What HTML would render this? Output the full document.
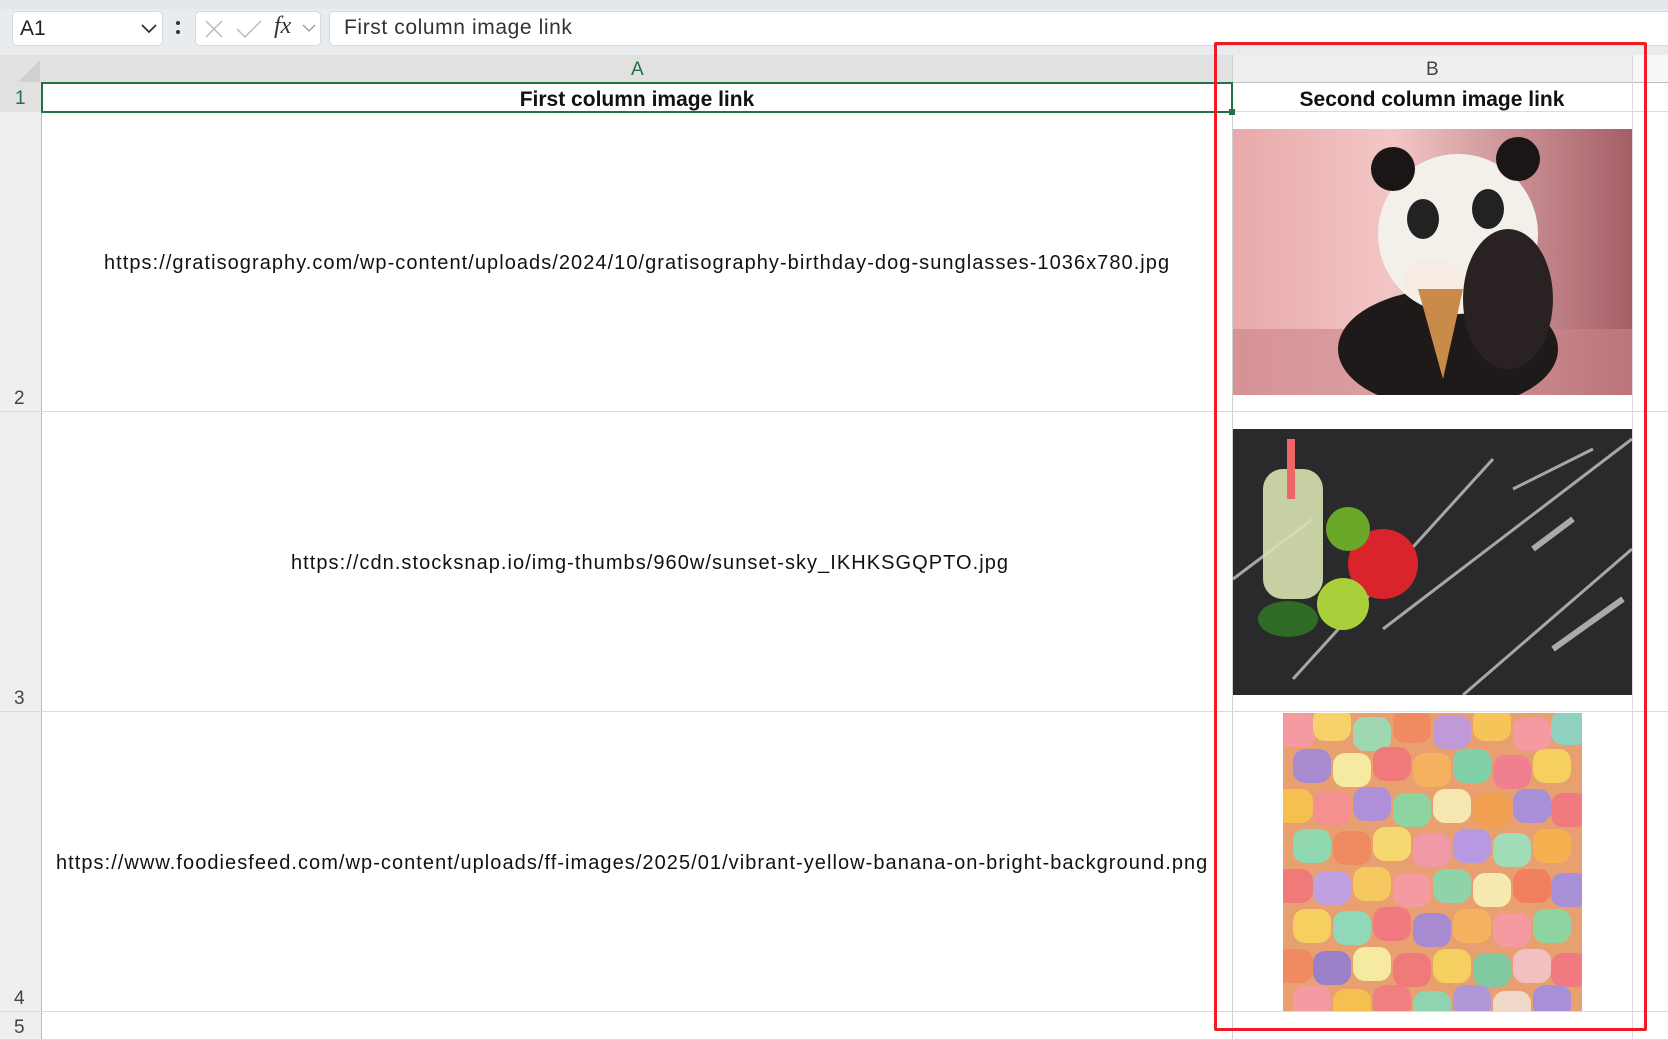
<!DOCTYPE html>
<html><head><meta charset="utf-8"><style>
*{margin:0;padding:0;box-sizing:border-box}
body{width:1668px;height:1040px;overflow:hidden;background:#fff;font-family:"Liberation Sans","Noto Sans CJK SC",sans-serif;position:relative}
.a{position:absolute}
.hl{position:absolute;height:1px;background:#dadada}
.vl{position:absolute;width:1px;background:#dadada}
.txt{position:absolute;font-size:20px;color:#111;white-space:nowrap}
.u{letter-spacing:1.05px}
</style></head><body>
<div class="a" style="left:0;top:0;width:1668px;height:55px;background:#e9ecef"></div>
<div class="a" style="left:0;top:0;width:1668px;height:9px;background:#e3e6ea"></div>
<div class="a" style="left:12px;top:11px;width:151px;height:35px;background:#fff;border:1px solid #d6d9dd;border-radius:5px"></div>
<div class="txt" style="left:20px;top:17px;font-size:21px;color:#222">A1</div>
<svg class="a" style="left:141px;top:23px" width="16" height="10"><path d="M1 2 L8 9 L15 2" stroke="#333" stroke-width="1.8" fill="none"/></svg>
<div class="a" style="left:176px;top:21px;width:4px;height:4px;background:#333;border-radius:2px"></div>
<div class="a" style="left:176px;top:30px;width:4px;height:4px;background:#333;border-radius:2px"></div>
<div class="a" style="left:195px;top:11px;width:126px;height:35px;background:#fff;border:1px solid #d6d9dd;border-radius:5px"></div>
<svg class="a" style="left:203px;top:18px" width="22" height="22"><path d="M3 3 L19 19 M19 3 L3 19" stroke="#bbb" stroke-width="1.5"/></svg>
<svg class="a" style="left:235px;top:18px" width="28" height="22"><path d="M2 11 L10 19 L26 3" stroke="#bbb" stroke-width="1.5" fill="none"/></svg>
<div class="txt" style="left:274px;top:13px;font-family:'Liberation Serif',serif;font-style:italic;font-size:24px;color:#333">fx</div>
<svg class="a" style="left:302px;top:24px" width="14" height="9"><path d="M1 1 L7 7 L13 1" stroke="#999" stroke-width="1.3" fill="none"/></svg>
<div class="a" style="left:329px;top:11px;width:1400px;height:35px;background:#fff;border:1px solid #d6d9dd;border-radius:5px"></div>
<div class="txt u" style="left:344px;top:16px;font-size:21px;color:#333;letter-spacing:.6px">First column image link</div>

<!-- headers -->
<div class="a" style="left:0;top:55px;width:1668px;height:28px;background:#e1e1e1"></div>
<div class="a" style="left:1232px;top:55px;width:400px;height:28px;background:#efefef"></div>
<div class="a" style="left:1632px;top:55px;width:36px;height:28px;background:#f7f7f7"></div>
<svg class="a" style="left:18px;top:60px" width="22" height="22"><path d="M22 0 L22 22 L0 22 Z" fill="#d0d0d0"/></svg>
<div class="a" style="left:0;top:83px;width:42px;height:957px;background:#efefef;border-right:1px solid #bdbdbd"></div>
<div class="a" style="left:0;top:83px;width:42px;height:29px;background:#e1e1e1;border-right:1px solid #bdbdbd"></div>
<div class="a" style="left:42px;top:82px;width:1626px;height:1px;background:#bdbdbd"></div>
<div class="txt" style="left:631px;top:59px;font-size:19px;color:#217346">A</div>
<div class="txt" style="left:1426px;top:59px;font-size:19px;color:#444">B</div>
<div class="txt" style="left:15px;top:88px;font-size:19px;color:#217346">1</div>
<div class="txt" style="left:14px;top:388px;font-size:19px;color:#444">2</div>
<div class="txt" style="left:14px;top:688px;font-size:19px;color:#444">3</div>
<div class="txt" style="left:14px;top:988px;font-size:19px;color:#444">4</div>
<div class="txt" style="left:14px;top:1017px;font-size:19px;color:#444">5</div>
<!-- grid -->
<div class="vl" style="left:1232px;top:55px;height:985px;background:#d0d0d0"></div>
<div class="vl" style="left:1632px;top:55px;height:985px"></div>
<div class="hl" style="left:42px;top:111px;width:1626px"></div>
<div class="hl" style="left:0;top:411px;width:1668px"></div>
<div class="hl" style="left:0;top:711px;width:1668px"></div>
<div class="hl" style="left:0;top:1011px;width:1668px"></div>
<div class="hl" style="left:0;top:1039px;width:1668px"></div>
<!-- selection -->
<div class="a" style="left:41px;top:82px;width:1192px;height:31px;border:2px solid #217346"></div>
<div class="a" style="left:1229px;top:109px;width:6px;height:6px;background:#217346"></div>
<!-- text -->
<div class="txt" style="left:42px;width:1190px;text-align:center;top:88px;font-weight:bold;font-size:21px">First column image link</div>
<div class="txt" style="left:1232px;width:400px;text-align:center;top:88px;font-weight:bold;font-size:21px">Second column image link</div>
<div class="txt u" style="left:104px;top:252px">https://gratisography.com/wp-content/uploads/2024/10/gratisography-birthday-dog-sunglasses-1036x780.jpg</div>
<div class="txt u" style="left:291px;top:552px">https://cdn.stocksnap.io/img-thumbs/960w/sunset-sky_IKHKSGQPTO.jpg</div>
<div class="txt u" style="left:56px;top:852px;width:1160px;overflow:hidden">https://www.foodiesfeed.com/wp-content/uploads/ff-images/2025/01/vibrant-yellow-banana-on-bright-background.png</div>

<!-- panda -->
<svg class="a" style="left:1233px;top:129px" width="399" height="266">
<defs><linearGradient id="pg" x1="0" x2="1"><stop offset="0" stop-color="#e8a9aa"/><stop offset=".4" stop-color="#f3c6c6"/><stop offset="1" stop-color="#a45e66"/></linearGradient></defs>
<rect width="399" height="266" fill="url(#pg)"/>
<rect y="200" width="399" height="66" fill="#c98488" opacity=".6"/>
<ellipse cx="215" cy="220" rx="110" ry="60" fill="#1e1a1a"/>
<ellipse cx="225" cy="105" rx="80" ry="80" fill="#f3efe9"/>
<ellipse cx="160" cy="40" rx="22" ry="22" fill="#1a1616"/>
<ellipse cx="285" cy="30" rx="22" ry="22" fill="#1a1616"/>
<ellipse cx="190" cy="90" rx="16" ry="20" fill="#222"/>
<ellipse cx="255" cy="80" rx="16" ry="20" fill="#222"/>
<ellipse cx="275" cy="170" rx="45" ry="70" fill="#2a2222"/>
<ellipse cx="200" cy="150" rx="30" ry="20" fill="#f6ece4"/>
<path d="M185 160 L230 160 L210 250 Z" fill="#c98a4a"/>
</svg>
<!-- fruit -->
<svg class="a" style="left:1233px;top:429px" width="399" height="266">
<rect width="399" height="266" fill="#2a2a2c"/>
<path d="M60 250 L260 30 M230 266 L399 120 M280 60 L360 20 M150 200 L399 10 M0 150 L80 90" stroke="#ddd" stroke-width="3" opacity=".7"/>
<path d="M300 120 L340 90 M320 220 L390 170" stroke="#fff" stroke-width="6" opacity=".6"/>
<rect x="30" y="40" width="60" height="130" rx="20" fill="#d8e2b0" opacity=".9"/>
<rect x="54" y="10" width="8" height="60" fill="#e66"/>
<circle cx="150" cy="135" r="35" fill="#d8242a"/>
<circle cx="115" cy="100" r="22" fill="#6aa82a"/>
<circle cx="110" cy="175" r="26" fill="#a9cf3b"/>
<ellipse cx="55" cy="190" rx="30" ry="18" fill="#2f6b26"/>
</svg>
<!-- candy -->
<svg class="a" style="left:1283px;top:713px" width="299" height="298">
<rect width="299" height="298" fill="#e8a070"/>
<g>
<rect x="-5" y="0" width="38" height="34" rx="12" fill="#f49aa0"/><rect x="30" y="-6" width="38" height="34" rx="12" fill="#f5d26a"/><rect x="70" y="4" width="38" height="34" rx="12" fill="#9fd8b0"/><rect x="110" y="-4" width="38" height="34" rx="12" fill="#f08a60"/><rect x="150" y="2" width="38" height="34" rx="12" fill="#c09ad8"/><rect x="190" y="-6" width="38" height="34" rx="12" fill="#f5c55a"/><rect x="230" y="4" width="38" height="34" rx="12" fill="#f49aa0"/><rect x="268" y="-2" width="38" height="34" rx="12" fill="#90d0c0"/>
<rect x="10" y="36" width="38" height="34" rx="12" fill="#a78ad0"/><rect x="50" y="40" width="38" height="34" rx="12" fill="#f6eaa0"/><rect x="90" y="34" width="38" height="34" rx="12" fill="#f07a7a"/><rect x="130" y="40" width="38" height="34" rx="12" fill="#f5b060"/><rect x="170" y="36" width="38" height="34" rx="12" fill="#80d0a8"/><rect x="210" y="42" width="38" height="34" rx="12" fill="#f08090"/><rect x="250" y="36" width="38" height="34" rx="12" fill="#f5d060"/>
<rect x="-8" y="76" width="38" height="34" rx="12" fill="#f5c050"/><rect x="30" y="78" width="38" height="34" rx="12" fill="#f49090"/><rect x="70" y="74" width="38" height="34" rx="12" fill="#b090d8"/><rect x="110" y="80" width="38" height="34" rx="12" fill="#8ed4a0"/><rect x="150" y="76" width="38" height="34" rx="12" fill="#f6e6b0"/><rect x="190" y="80" width="38" height="34" rx="12" fill="#f0a050"/><rect x="230" y="76" width="38" height="34" rx="12" fill="#a890d8"/><rect x="268" y="80" width="38" height="34" rx="12" fill="#f07a80"/>
<rect x="10" y="116" width="38" height="34" rx="12" fill="#90d8b0"/><rect x="50" y="118" width="38" height="34" rx="12" fill="#f08a60"/><rect x="90" y="114" width="38" height="34" rx="12" fill="#f5d870"/><rect x="130" y="120" width="38" height="34" rx="12" fill="#f09aa8"/><rect x="170" y="116" width="38" height="34" rx="12" fill="#b898e0"/><rect x="210" y="120" width="38" height="34" rx="12" fill="#a0dcb8"/><rect x="250" y="116" width="38" height="34" rx="12" fill="#f5b050"/>
<rect x="-8" y="156" width="38" height="34" rx="12" fill="#f07a7a"/><rect x="30" y="158" width="38" height="34" rx="12" fill="#c0a0e0"/><rect x="70" y="154" width="38" height="34" rx="12" fill="#f5c860"/><rect x="110" y="160" width="38" height="34" rx="12" fill="#f49aa0"/><rect x="150" y="156" width="38" height="34" rx="12" fill="#8ed4a8"/><rect x="190" y="160" width="38" height="34" rx="12" fill="#f6eab0"/><rect x="230" y="156" width="38" height="34" rx="12" fill="#f08060"/><rect x="268" y="160" width="38" height="34" rx="12" fill="#a890d8"/>
<rect x="10" y="196" width="38" height="34" rx="12" fill="#f5d060"/><rect x="50" y="198" width="38" height="34" rx="12" fill="#90d8b8"/><rect x="90" y="194" width="38" height="34" rx="12" fill="#f07a80"/><rect x="130" y="200" width="38" height="34" rx="12" fill="#a88ad0"/><rect x="170" y="196" width="38" height="34" rx="12" fill="#f5b060"/><rect x="210" y="200" width="38" height="34" rx="12" fill="#f49aa0"/><rect x="250" y="196" width="38" height="34" rx="12" fill="#8ed4a0"/>
<rect x="-8" y="236" width="38" height="34" rx="12" fill="#f08a60"/><rect x="30" y="238" width="38" height="34" rx="12" fill="#9a80c8"/><rect x="70" y="234" width="38" height="34" rx="12" fill="#f6eaa0"/><rect x="110" y="240" width="38" height="34" rx="12" fill="#f07a7a"/><rect x="150" y="236" width="38" height="34" rx="12" fill="#f5d060"/><rect x="190" y="240" width="38" height="34" rx="12" fill="#80c8a0"/><rect x="230" y="236" width="38" height="34" rx="12" fill="#f2c0c0"/><rect x="268" y="240" width="38" height="34" rx="12" fill="#f07a80"/>
<rect x="10" y="272" width="38" height="34" rx="12" fill="#f49aa0"/><rect x="50" y="276" width="38" height="34" rx="12" fill="#f5c050"/><rect x="90" y="272" width="38" height="34" rx="12" fill="#f08080"/><rect x="130" y="278" width="38" height="34" rx="12" fill="#8ed4b0"/><rect x="170" y="272" width="38" height="34" rx="12" fill="#b098d8"/><rect x="210" y="278" width="38" height="34" rx="12" fill="#f0d8c8"/><rect x="250" y="272" width="38" height="34" rx="12" fill="#a890d8"/>
</g></svg>
<!-- red box -->
<div class="a" style="left:1214px;top:42px;width:433px;height:989px;border:3px solid #ee1c25;border-radius:2px"></div>
</body></html>
